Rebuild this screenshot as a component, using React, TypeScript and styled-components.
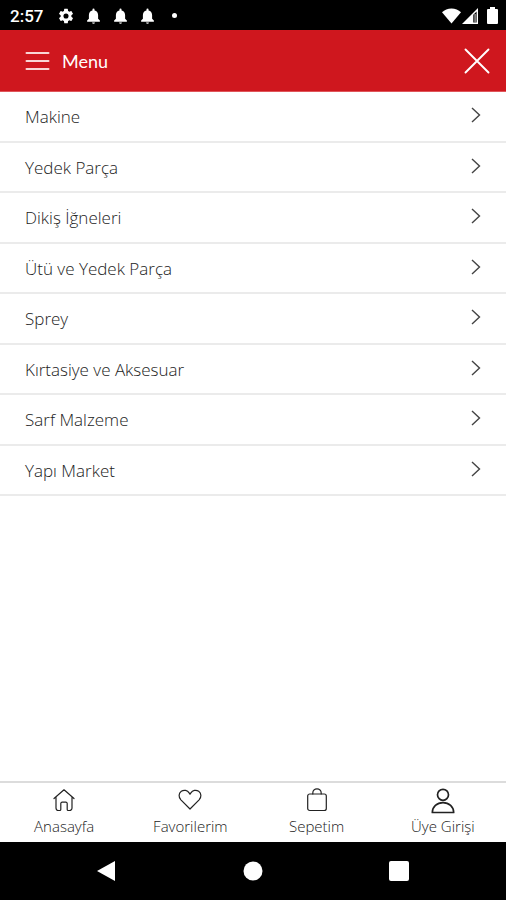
import React from "react";
import styled, { createGlobalStyle } from "styled-components";

const GlobalStyle = createGlobalStyle`
  * { box-sizing: border-box; }
  body { margin: 0; background: #fff; font-family: "Open Sans", "Noto Sans", sans-serif; }
  button { border: 0; padding: 0; background: none; color: inherit; font: inherit; cursor: pointer; }
  a { color: inherit; text-decoration: none; }
  svg { display: block; }
`;

const Screen = styled.div`
  display: flex;
  flex-direction: column;
  min-height: 100vh;
`;

const StatusBar = styled.div`
  display: flex;
  align-items: center;
  justify-content: space-between;
  height: 30px;
  padding: 1px 8px 0 10px;
  background: #000;
  color: #fff;
`;

const StatusGroup = styled.div<{ $gap: number }>`
  display: flex;
  align-items: center;
  gap: ${(p) => p.$gap}px;
`;

const Clock = styled.time`
  margin-right: 4px;
  font: 500 17px/20px Roboto, sans-serif;
`;

const Dot = styled.span`
  width: 5px;
  height: 5px;
  margin-left: 6px;
  border-radius: 50%;
  background: #fff;
`;

const BatterySlot = styled.span`
  padding-left: 8px;
`;

const Header = styled.header`
  display: flex;
  align-items: center;
  justify-content: space-between;
  height: 62px;
  padding: 0 16px 0 25px;
  background: #cf171e;
  border-bottom: 1px solid #e0555a;
  color: #fff;
`;

const MenuButton = styled.button`
  display: flex;
  align-items: center;
  gap: 12px;
`;

const Title = styled.span`
  font: 400 18px/24px Lato, sans-serif;
`;

const CategoryList = styled.ul`
  display: grid;
  grid-auto-rows: 1fr;
  min-height: 404px;
  margin: 0;
  padding: 0;
  list-style: none;
`;

const CategoryItem = styled.li`
  display: grid;
  border-bottom: 2px solid #ebebeb;
`;

const CategoryLink = styled.a`
  display: flex;
  align-items: center;
  justify-content: space-between;
  padding: 2px 25px 0;
  color: #222;
  font-weight: 300;
  font-size: 17px;
  line-height: 24px;

  svg { margin-bottom: 4px; }
`;

const TabBar = styled.nav`
  display: grid;
  grid-template-columns: repeat(4, 1fr);
  height: 61px;
  margin-top: auto;
  padding-left: 1px;
  border-top: 2px solid #dcdcdc;
`;

const Tab = styled.a`
  display: flex;
  flex-direction: column;
  align-items: center;
  gap: 2px;
  padding-top: 5px;
  color: #222;
  font-weight: 300;
  font-size: 15px;
  line-height: 20px;
`;

const SystemBar = styled.div`
  display: flex;
  align-items: center;
  justify-content: center;
  gap: 126px;
  height: 58px;
  background: #000;
  color: #fff;
`;

const Gear = () => (
  <svg width="18" height="18" viewBox="0 0 24 24" fill="currentColor" aria-hidden="true">
    <path d="M19.14 12.94c.04-.3.06-.61.06-.94s-.02-.64-.07-.94l2.03-1.58a.49.49 0 0 0 .12-.61l-1.92-3.32a.49.49 0 0 0-.59-.22l-2.39.96a7 7 0 0 0-1.62-.94l-.36-2.54a.48.48 0 0 0-.48-.41h-3.84a.47.47 0 0 0-.47.41l-.36 2.54c-.59.24-1.13.57-1.62.94l-2.39-.96a.48.48 0 0 0-.59.22L2.74 8.87a.47.47 0 0 0 .12.61l2.03 1.58a6 6 0 0 0 0 1.88l-2.03 1.58a.49.49 0 0 0-.12.61l1.92 3.32c.12.22.37.29.59.22l2.39-.96c.5.38 1.03.7 1.62.94l.36 2.54c.05.24.24.41.48.41h3.84c.24 0 .44-.17.47-.41l.36-2.54a7 7 0 0 0 1.62-.94l2.39.96c.22.08.47 0 .59-.22l1.92-3.32a.47.47 0 0 0-.12-.61zM12 15.4a3.4 3.4 0 1 1 0-6.8 3.4 3.4 0 0 1 0 6.8z" />
  </svg>
);

const Bell = () => (
  <svg width="17" height="18" viewBox="0 0 24 24" fill="currentColor" aria-hidden="true">
    <path d="M12 23a2 2 0 0 0 2-2h-4a2 2 0 0 0 2 2zm6.500-7v-5.500c0-3.200-1.900-5.700-5-6.400V3a1.500 1.500 0 0 0-3 0v1.100c-3.100.7-5 3.200-5 6.400V16l-2.500 2.500V20h18v-1.500z" />
  </svg>
);

const Wifi = () => (
  <svg width="19" height="16" viewBox="0 0 19 16" fill="currentColor" aria-hidden="true">
    <path d="M9.500 15.500 0 4.200C2.500 1.700 5.800.4 9.500.4S16.500 1.700 19 4.200z" />
  </svg>
);

const Signal = () => (
  <svg width="16" height="16" viewBox="0 0 16 16" fill="currentColor" aria-hidden="true">
    <path fillRule="evenodd" d="M16 0v16H0zM14.600 3.400 11.300 6.700v7.900h3.300z" />
    <path d="M12.600 6h.9v8.600h-.9z" />
  </svg>
);

const Battery = () => (
  <svg width="11" height="17" viewBox="0 0 11 17" fill="currentColor" aria-hidden="true">
    <path d="M3 0h5v2h2a1 1 0 0 1 1 1v13a1 1 0 0 1-1 1H1a1 1 0 0 1-1-1V3a1 1 0 0 1 1-1h2z" />
  </svg>
);

const Bars = () => (
  <svg width="25" height="20" viewBox="0 0 25 20" fill="none" stroke="#f9d5d5" strokeWidth="2" strokeLinecap="round" aria-hidden="true">
    <path d="M1.500 2h22M1.500 10h22M1.500 18h22" />
  </svg>
);

const Cross = () => (
  <svg width="26" height="26" viewBox="0 0 26 26" fill="none" stroke="#fff" strokeWidth="1.900" strokeLinecap="round" aria-hidden="true">
    <path d="M1.500 1.500l23 23M24.500 1.500l-23 23" />
  </svg>
);

const Chevron = () => (
  <svg width="10" height="16" viewBox="0 0 10 16" fill="none" stroke="#444" strokeWidth="1.400" aria-hidden="true">
    <path d="M1 1l7.500 7L1 15" />
  </svg>
);

const TabSvg = styled.svg.attrs({
  width: 26,
  height: 26,
  viewBox: "0 0 26 26",
  fill: "none",
  stroke: "currentColor",
  "aria-hidden": true,
})`
  stroke-linejoin: round;
  stroke-linecap: round;
`;

const House = () => (
  <TabSvg strokeWidth="1.200">
    <path d="M3 10.500 13 1.800l10 8.700M5 9v11a2.500 2.500 0 0 0 2.500 2.500h1.300a1 1 0 0 0 1-1v-6a1.300 1.300 0 0 1 1.300-1.300h3.800a1.300 1.300 0 0 1 1.300 1.300v6a1 1 0 0 0 1 1h1.300A2.500 2.500 0 0 0 21 20V9" />
  </TabSvg>
);

const Heart = () => (
  <TabSvg strokeWidth="1.200">
    <path d="M13 21 3.900 11.800C1.300 9 1.600 5.200 4.300 3.300c2.700-1.800 6.200-1 7.800 1.600l.9 1.400.9-1.400c1.600-2.600 5.100-3.400 7.800-1.600 2.700 1.900 3 5.700.4 8.500z" />
  </TabSvg>
);

const Bag = () => (
  <TabSvg strokeWidth="1.200">
    <rect x="3.700" y="6" width="18.600" height="16.500" rx="2" />
    <path d="M8.800 6V5a4.200 4.200 0 0 1 8.400 0v1" />
  </TabSvg>
);

const Person = () => (
  <TabSvg strokeWidth="1.700" stroke="#111">
    <circle cx="13" cy="6.800" r="5.500" />
    <path d="M2.300 24.500c0-5.800 4.700-9.900 10.700-9.900s10.700 4.100 10.700 9.900z" />
  </TabSvg>
);

const categories = [
  "Makine",
  "Yedek Parça",
  "Dikiş İğneleri",
  "Ütü ve Yedek Parça",
  "Sprey",
  "Kırtasiye ve Aksesuar",
  "Sarf Malzeme",
  "Yapı Market",
];

const tabs = [
  { label: "Anasayfa", Icon: House },
  { label: "Favorilerim", Icon: Heart },
  { label: "Sepetim", Icon: Bag },
  { label: "Üye Girişi", Icon: Person },
];

export default function App() {
  return (
    <Screen lang="tr">
      <GlobalStyle />
      <StatusBar>
        <StatusGroup $gap={10}>
          <Clock>2:57</Clock>
          <Gear />
          <Bell />
          <Bell />
          <Bell />
          <Dot />
        </StatusGroup>
        <StatusGroup $gap={1}>
          <Wifi />
          <Signal />
          <BatterySlot>
            <Battery />
          </BatterySlot>
        </StatusGroup>
      </StatusBar>
      <Header>
        <MenuButton type="button">
          <Bars />
          <Title>Menu</Title>
        </MenuButton>
        <button type="button" aria-label="Kapat">
          <Cross />
        </button>
      </Header>
      <main>
        <CategoryList>
          {categories.map((name) => (
            <CategoryItem key={name}>
              <CategoryLink href="#">
                {name}
                <Chevron />
              </CategoryLink>
            </CategoryItem>
          ))}
        </CategoryList>
      </main>
      <TabBar>
        {tabs.map(({ label, Icon }) => (
          <Tab href="#" key={label}>
            <Icon />
            {label}
          </Tab>
        ))}
      </TabBar>
      <SystemBar>
        <button type="button" aria-label="Geri">
          <svg width="20" height="22" viewBox="0 0 20 22" fill="currentColor">
            <path d="M18 1v20L0 11z" />
          </svg>
        </button>
        <button type="button" aria-label="Ana ekran">
          <svg width="20" height="20" viewBox="0 0 20 20" fill="currentColor">
            <circle cx="10" cy="10" r="9.500" />
          </svg>
        </button>
        <button type="button" aria-label="Son uygulamalar">
          <svg width="20" height="20" viewBox="0 0 20 20" fill="currentColor">
            <rect width="20" height="20" rx="2" />
          </svg>
        </button>
      </SystemBar>
    </Screen>
  );
}
